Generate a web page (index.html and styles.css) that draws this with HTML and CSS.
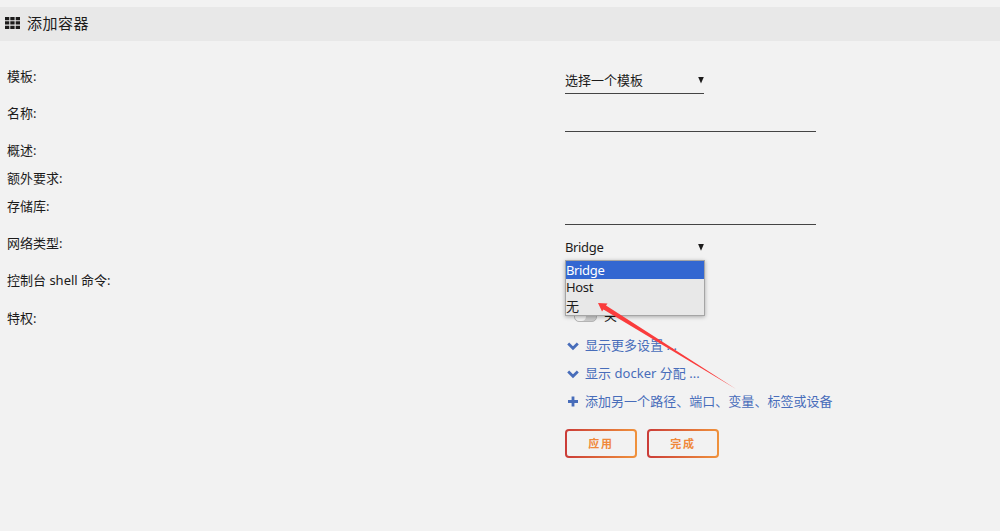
FILE: index.html
```
<!DOCTYPE html>
<html lang="zh-cn">
<head>
    <meta charset="UTF-8">
    <meta name="viewport" content="width=device-width, initial-scale=1.0">
    <title>添加容器</title>
    <link rel="stylesheet" href="styles.css">
</head>
<body>
    <div class="title">
        <svg class="title-icon" viewBox="0 0 15 12" width="15" height="12">
            <path d="M0 0h4.300v3.300H0zM5.300 0h4.300v3.300H5.300zM10.700 0H15v3.300h-4.300zM0 4.300h4.300v3.300H0zM5.300 4.300h4.300v3.300H5.300zM10.700 4.300H15v3.300h-4.300zM0 8.700h4.300V12H0zM5.300 8.700h4.300V12H5.300zM10.700 8.700H15V12h-4.300z"/>
        </svg>
        <span class="title-text">添加容器</span>
    </div>

    <form class="container-form">
        <div class="row">
            <div class="label">模板:</div>
            <div class="select"><span>选择一个模板</span><i class="caret"></i></div>
        </div>
        <div class="row">
            <div class="label">名称:</div>
            <input class="text-input" type="text" name="contName">
        </div>
        <div class="row short">
            <div class="label">概述:</div>
        </div>
        <div class="row short">
            <div class="label">额外要求:</div>
        </div>
        <div class="row">
            <div class="label">存储库:</div>
            <input class="text-input" type="text" name="contRepository">
        </div>
        <div class="row">
            <div class="label">网络类型:</div>
            <div class="select">
                <span class="latin">Bridge</span><i class="caret"></i>
                <div class="options">
                    <div class="option latin selected">Bridge</div>
                    <div class="option latin host">Host</div>
                    <div class="option">无</div>
                    <svg class="arrow" viewBox="0 0 140 88" width="140" height="88">
                        <path d="M0 0l9.500 .5-1.500 2L138 86 5.500 6.500 4 8.500z"/>
                    </svg>
                </div>
            </div>
        </div>
        <div class="row">
            <div class="label">控制台 shell 命令:</div>
        </div>
        <div class="row short">
            <div class="label">特权:</div>
            <div class="switch"><span class="switch-track"><span class="switch-button"></span></span><span>关</span></div>
        </div>
        <div class="links">
            <a class="link" href="#">
                <svg viewBox="0 0 12 12" width="12" height="12"><path d="M1.200 3.500L6 8.200l4.800-4.700"/></svg>
                <span>显示更多设置 ...</span>
            </a>
            <a class="link" href="#">
                <svg viewBox="0 0 12 12" width="12" height="12"><path d="M1.200 3.500L6 8.200l4.800-4.700"/></svg>
                <span>显示 docker 分配 ...</span>
            </a>
            <a class="link" href="#">
                <svg viewBox="0 0 12 12" width="12" height="12"><path d="M6 .5v10M1 5.500h10"/></svg>
                <span>添加另一个路径、端口、变量、标签或设备</span>
            </a>
        </div>
        <div class="buttons">
            <button type="button" class="btn">应用</button>
            <button type="button" class="btn">完成</button>
        </div>
    </form>
</body>
</html>
```
FILE: styles.css
```
* {
    box-sizing: border-box;
}
body {
    margin: 0;
    padding-top: 7px;
    background-color: #f2f2f2;
    color: #1c1b1b;
    font-family: "Noto Sans", "Noto Sans CJK SC", sans-serif;
    font-size: 13px;
}
.title {
    display: flex;
    align-items: center;
    height: 34px;
    padding: 0 0 2px 5px;
    gap: 7px;
    background-color: #e8e8e8;
    font-size: 15px;
    letter-spacing: 0.5px;
}
.title-icon {
    fill: #1c1b1b;
}
.title-text {
    padding-bottom: 2px;
}
.container-form {
    padding: 22px 0 0 7px;
}
.row {
    display: grid;
    grid-template-columns: 558px 1fr;
    align-items: start;
    height: 37.2px;
    line-height: 28px;
}
.row.short {
    height: 27.8px;
}
.label {
    line-height: 26.5px;
}
.select {
    position: relative;
    display: flex;
    align-items: center;
    justify-content: space-between;
    width: 139px;
    height: 28px;
    margin-top: 3px;
    border-bottom: 1px solid #444;
}
.latin {
    letter-spacing: -0.35px;
}
.caret {
    width: 6px;
    height: 7px;
    margin-top: 1px;
    background-color: #1c1b1b;
    clip-path: polygon(0 0, 100% 0, 50% 100%);
}
.text-input {
    width: 251px;
    height: 32px;
    padding: 4px 0;
    border: none;
    border-bottom: 1px solid #444;
    background: transparent;
    font: inherit;
    outline: none;
}
.options {
    position: absolute;
    z-index: 1;
    top: 27px;
    left: 0;
    width: 140px;
    height: 56px;
    border: 1px solid #a5a5a5;
    background-color: #e8e8e8;
    box-shadow: 0 1px 4px rgba(0, 0, 0, 0.3);
}
.option {
    height: 18px;
    line-height: 18px;
}
.option.selected {
    background-color: #3367d1;
    color: #fff;
}
.option.host {
    line-height: 16px;
}
.arrow {
    position: absolute;
    top: 42px;
    left: 32px;
    fill: #fa3c3c;
}
.switch {
    display: flex;
    align-items: center;
    gap: 7px;
    height: 21px;
    padding-left: 9px;
}
.switch-track {
    width: 23px;
    height: 11px;
    margin-top: 2px;
    border: 1px solid #b5b5b5;
    border-radius: 5px;
    background-color: #ccc;
}
.switch-button {
    display: block;
    width: 11px;
    height: 9px;
    border-radius: 5px;
    background-color: #f2f2f2;
}
.links {
    margin-left: 558px;
}
.link {
    display: flex;
    align-items: center;
    gap: 6px;
    height: 28px;
    padding-left: 2px;
    color: #486dba;
    text-decoration: none;
}
.link span {
    padding-bottom: 3px;
    letter-spacing: 0.03px;
}
.link svg {
    fill: none;
    stroke: #486dba;
    stroke-width: 2.8;
}
.buttons {
    display: flex;
    gap: 10px;
    margin: 13px 0 0 558px;
}
.btn {
    width: 72px;
    height: 29px;
    padding: 0 0 2px;
    border: 2px solid transparent;
    border-radius: 4px;
    background: linear-gradient(#f2f2f2, #f2f2f2) padding-box, linear-gradient(90deg, #cb3c38, #f0923b) border-box;
    color: #f0883a;
    font-family: "Noto Sans CJK SC", sans-serif;
    font-size: 11px;
    font-weight: bold;
    letter-spacing: 1.8px;
}
```
